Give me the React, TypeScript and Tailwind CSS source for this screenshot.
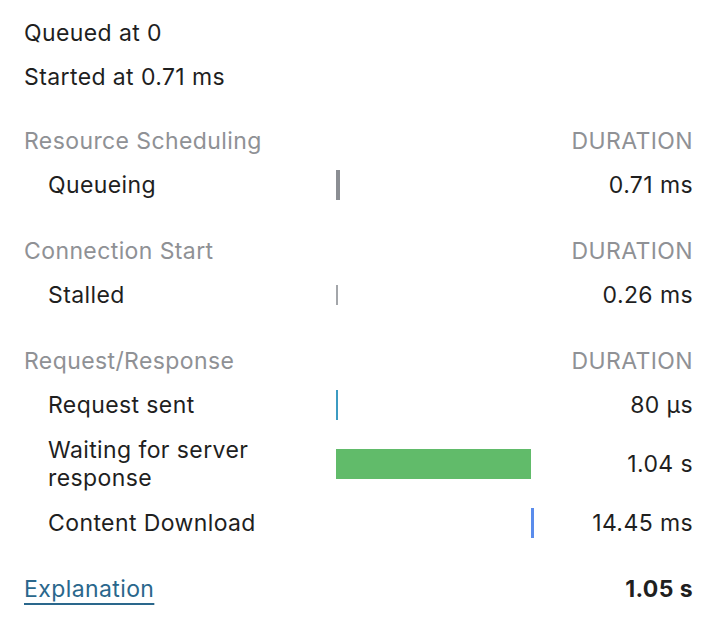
import React from "react";

type Row = {
  label: string;
  offset: number;
  width: number;
  height: number;
  color: string;
  duration: string;
  tall?: boolean;
};

type Section = { title: string; rows: Row[] };

const sections: Section[] = [
  {
    title: "Resource Scheduling",
    rows: [
      { label: "Queueing", offset: 0, width: 4, height: 30, color: "#8b8e93", duration: "0.71 ms" },
    ],
  },
  {
    title: "Connection Start",
    rows: [
      { label: "Stalled", offset: 0, width: 2, height: 20, color: "#a3a6aa", duration: "0.26 ms" },
    ],
  },
  {
    title: "Request/Response",
    rows: [
      { label: "Request sent", offset: 0, width: 2, height: 30, color: "#3c9bc2", duration: "80 µs" },
      {
        label: "Waiting for server response",
        offset: 0,
        width: 195,
        height: 30,
        color: "#61bb6a",
        duration: "1.04 s",
        tall: true,
      },
      { label: "Content Download", offset: 195, width: 3, height: 30, color: "#5a8cec", duration: "14.45 ms" },
    ],
  },
];

function TimingRow({ row }: { row: Row }) {
  return (
    <div
      className={
        "grid grid-cols-[312px_198px_1fr] items-center " +
        (row.tall ? "py-[9px]" : "h-[44px]")
      }
    >
      <div className="pl-6 pr-4 leading-[28px] text-[#1f1f1f]">
        {row.tall ? (
          <>
            Waiting for server
            <br />
            response
          </>
        ) : (
          row.label
        )}
      </div>
      <div className="flex items-center">
        <div
          style={{
            marginLeft: row.offset,
            width: row.width,
            height: row.height,
            backgroundColor: row.color,
          }}
        />
      </div>
      <div className="text-right text-[#1f1f1f] leading-[28px]">{row.duration}</div>
    </div>
  );
}

export default function App() {
  return (
    <div
      className="w-[712px] h-[628px] bg-white pl-6 pr-[19px] pt-[11px] text-[23px] tracking-[0.4px]"
      style={{ fontFamily: "Inter, 'Noto Sans', sans-serif" }}
    >
      <div className="h-[44px] flex items-center text-[#1f1f1f]">Queued at 0</div>
      <div className="h-[44px] flex items-center text-[#1f1f1f]">Started at 0.71 ms</div>

      {sections.map((s, i) => (
        <div key={s.title} className={i === 0 ? "mt-[20px]" : "mt-[22px]"}>
          <div className="h-[44px] flex items-center justify-between text-[#8f9195]">
            <span>{s.title}</span>
            <span>DURATION</span>
          </div>
          {s.rows.map((r) => (
            <TimingRow key={r.label} row={r} />
          ))}
        </div>
      ))}

      <div className="mt-[22px] h-[44px] flex items-center justify-between">
        <a
          href="#"
          className="text-[#2a678c] underline underline-offset-[6px] decoration-2"
        >
          Explanation
        </a>
        <span className="font-bold text-[#1f1f1f]">1.05 s</span>
      </div>
    </div>
  );
}
